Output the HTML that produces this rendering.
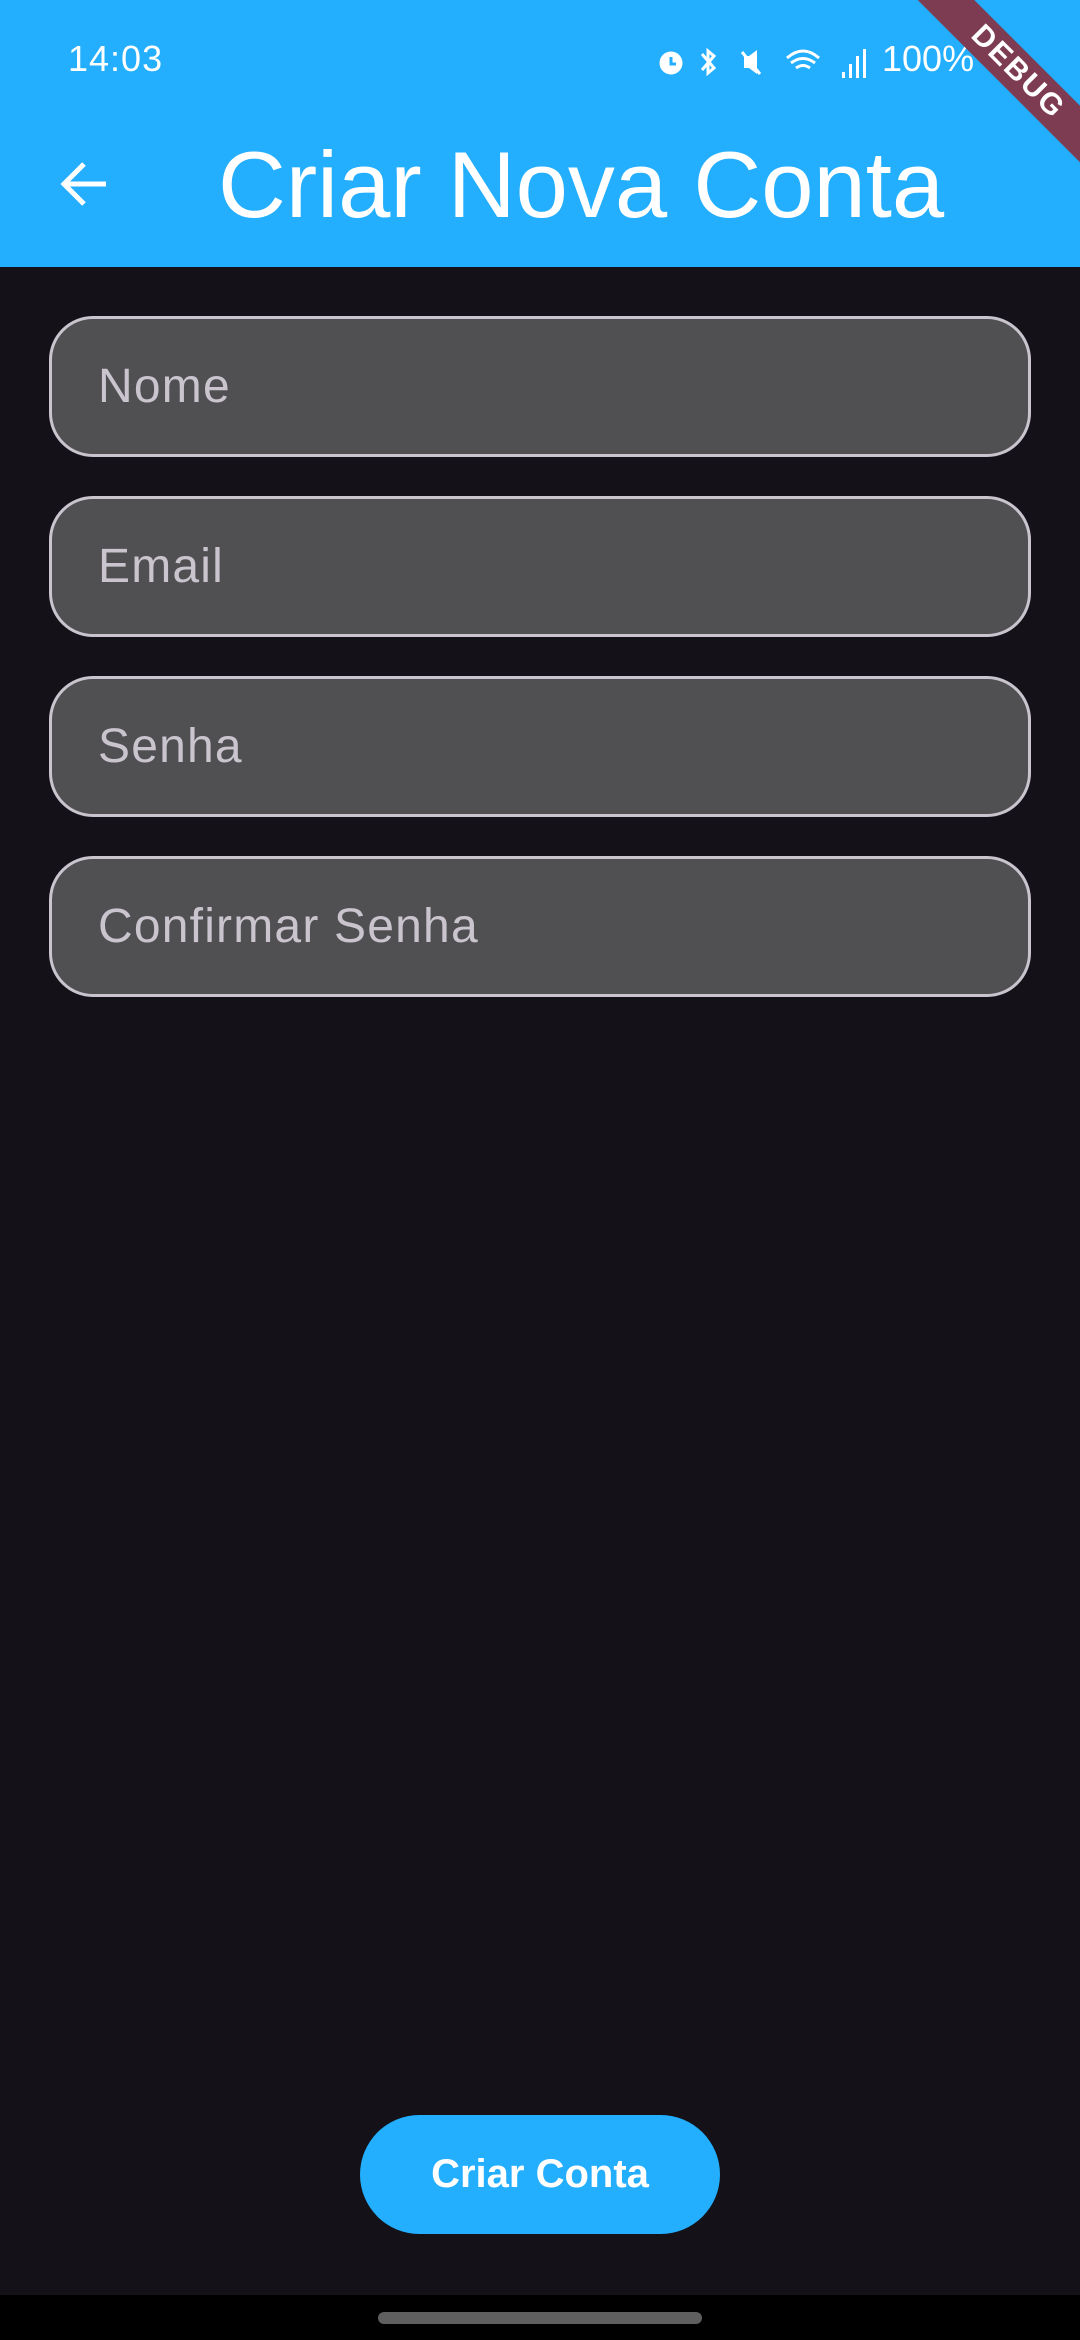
<!DOCTYPE html>
<html><head><meta charset="utf-8"><style>
*{margin:0;padding:0;box-sizing:border-box}
body{width:1080px;height:2340px;background:#141218;font-family:"Liberation Sans",Roboto,sans-serif;position:relative;overflow:hidden}
.bar{position:absolute;left:0;top:0;width:1080px;height:267px;background:#23aefe}
.time{position:absolute;left:68px;top:38px;color:#fff;font-size:36px;letter-spacing:1px}
.stat{position:absolute;left:885px;top:38px;color:#fff;font-size:36px}
.title{position:absolute;left:218px;top:120px;color:#fff;font-size:94px;line-height:130px}
.field{position:absolute;left:49px;width:982px;height:141px;background:#505053;border:3px solid #c9c4cd;border-radius:44px;color:#c9c4cd;font-size:48px;letter-spacing:1.2px;padding-left:46px;line-height:135px}
.btn{position:absolute;left:360px;top:2115px;width:360px;height:119px;background:#23aefe;border-radius:60px;color:#fff;font-size:40px;font-weight:bold;text-align:center;line-height:119px}
.nav{position:absolute;left:0;top:2295px;width:1080px;height:45px;background:#000}
.handle{position:absolute;left:378px;top:2312px;width:324px;height:12px;border-radius:6px;background:#5f5f5f}
.ribbon{position:absolute;left:838px;top:52px;width:360px;height:40px;background:#7d3c52;transform:rotate(45deg);color:#fff;font-weight:bold;font-size:30px;text-align:center;line-height:40px;letter-spacing:2px}
</style></head><body>
<div class="bar"></div>
<div class="time">14:03</div>
<svg style="position:absolute;left:652px;top:44px" width="230" height="36" viewBox="0 0 230 36" fill="#fff" stroke="#fff">
<circle cx="19" cy="19" r="11" fill="#fff"/><path d="M19 13v7h5" stroke="#23aefe" stroke-width="3" fill="none"/>
<path d="M50 10l12 14-6 5V7l6 5-12 14" fill="none" stroke-width="3"/>
<path d="M92 12h5l8-6v24l-8-6h-5z" stroke="none"/><path d="M90 8l18 22" stroke-width="3"/>
<path d="M135 14q16-14 32 0M139 19q12-9 24 0M144 24q7-5 14 0" fill="none" stroke-width="3"/>
<rect x="190" y="28" width="3" height="6" stroke="none"/><rect x="197" y="20" width="3" height="14" stroke="none"/><rect x="204" y="12" width="3" height="22" stroke="none"/><rect x="211" y="5" width="3" height="29" stroke="none"/>
</svg>
<div class="stat" style="left:882px">100%</div>
<div class="ribbon">DEBUG</div>
<svg style="position:absolute;left:58px;top:158px" width="52" height="52" viewBox="0 0 52 52"><path d="M48 26H8M26 6L6 26l20 20" stroke="#fff" stroke-width="5" fill="none"/></svg>
<div class="title">Criar Nova Conta</div>
<div class="field" style="top:316px">Nome</div>
<div class="field" style="top:496px">Email</div>
<div class="field" style="top:676px">Senha</div>
<div class="field" style="top:856px">Confirmar Senha</div>
<div class="btn">Criar Conta</div>
<div class="nav"></div><div class="handle"></div>
</body></html>
